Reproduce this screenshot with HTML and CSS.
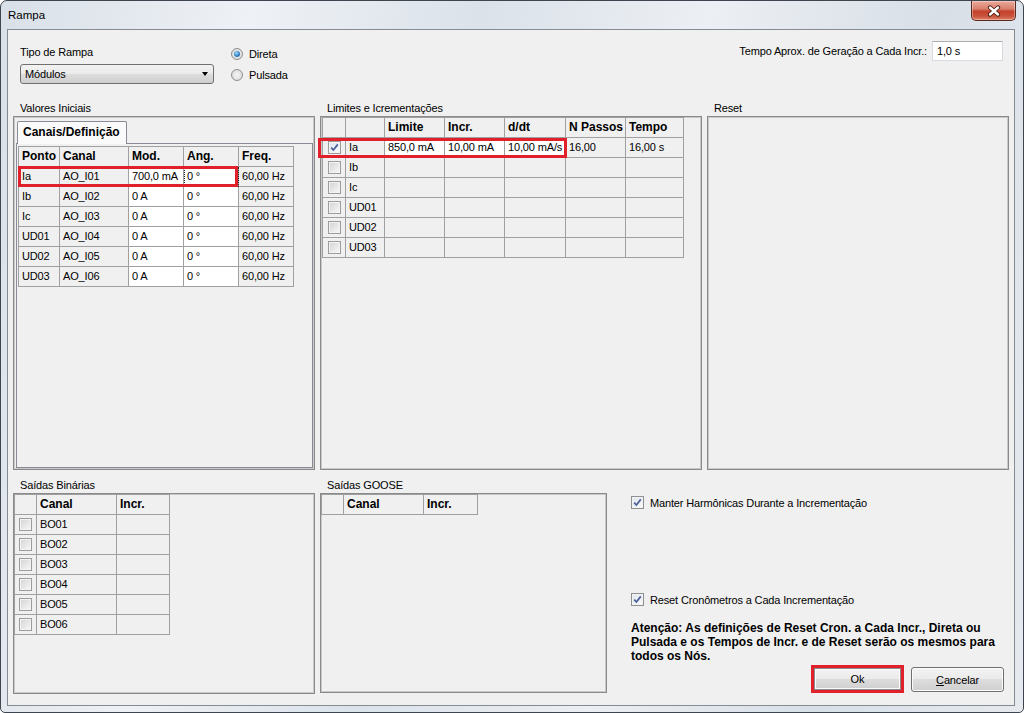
FILE: index.html
```html
<!DOCTYPE html>
<html lang="pt">
<head>
<meta charset="utf-8">
<title>Rampa</title>
<link rel="stylesheet" href="styles.css">
</head>
<body>
<div class="window">
  <div class="titlebar">
    <span class="title">Rampa</span>
    <div class="close">
      <svg width="14" height="12" viewBox="0 0 14 12"><path d="M3 2.5 L11 9.5 M11 2.5 L3 9.5" stroke="#4a1a10" stroke-width="4.2" stroke-linecap="round" fill="none"/><path d="M3 2.5 L11 9.5 M11 2.5 L3 9.5" stroke="#ffffff" stroke-width="2.4" stroke-linecap="round" fill="none"/></svg>
    </div>
  </div>
  <div class="client">
    <div class="top-row">
      <div class="tipo">
        <div class="lbl">Tipo de Rampa</div>
        <div class="combo"><span>Módulos</span><span class="arrow"></span></div>
      </div>
      <div class="radios">
        <div class="radio-row"><span class="radio on"></span>Direta</div>
        <div class="radio-row"><span class="radio"></span>Pulsada</div>
      </div>
      <div class="tempo">
        <span>Tempo Aprox. de Geração a Cada Incr.:</span>
        <div class="textbox">1,0 s</div>
      </div>
    </div>

    <div class="mid-row">
      <section class="group g-valores">
        <div class="glabel">Valores Iniciais</div>
        <div class="gbox valores-box">
          <div class="tabs">
            <div class="tabstrip"><div class="tab">Canais/Definição</div></div>
            <div class="tabpage">
              <div class="grid-wrap val-wrap">
                <div class="dg dg-val">
                  <div class="h">Ponto</div><div class="h">Canal</div><div class="h">Mod.</div><div class="h">Ang.</div><div class="h">Freq.</div>
                  <div>Ia</div><div>AO_I01</div><div class="w">700,0 mA</div><div class="w focus">0 °</div><div>60,00 Hz</div>
                  <div>Ib</div><div>AO_I02</div><div class="w">0 A</div><div class="w">0 °</div><div>60,00 Hz</div>
                  <div>Ic</div><div>AO_I03</div><div class="w">0 A</div><div class="w">0 °</div><div>60,00 Hz</div>
                  <div>UD01</div><div>AO_I04</div><div class="w">0 A</div><div class="w">0 °</div><div>60,00 Hz</div>
                  <div>UD02</div><div>AO_I05</div><div class="w">0 A</div><div class="w">0 °</div><div>60,00 Hz</div>
                  <div>UD03</div><div>AO_I06</div><div class="w">0 A</div><div class="w">0 °</div><div>60,00 Hz</div>
                </div>
                <div class="hl hl-val"></div>
              </div>
            </div>
          </div>
        </div>
      </section>

      <section class="group g-limites">
        <div class="glabel">Limites e Icrementações</div>
        <div class="gbox limites-box">
          <div class="grid-wrap lim-wrap">
            <div class="dg dg-lim">
              <div class="h"></div><div class="h"></div><div class="h">Limite</div><div class="h">Incr.</div><div class="h">d/dt</div><div class="h">N Passos</div><div class="h">Tempo</div>
              <div class="c"><span class="cb on"><svg width="11" height="11" viewBox="0 0 11 11"><path d="M2.2 5.6 L4.4 8 L8.8 2.4" stroke="#4a5e98" stroke-width="1.7" fill="none"/></svg></span></div><div>Ia</div><div class="w">850,0 mA</div><div class="w">10,00 mA</div><div class="w">10,00 mA/s</div><div>16,00</div><div>16,00 s</div>
              <div class="c"><span class="cb"></span></div><div>Ib</div><div></div><div></div><div></div><div></div><div></div>
              <div class="c"><span class="cb"></span></div><div>Ic</div><div></div><div></div><div></div><div></div><div></div>
              <div class="c"><span class="cb"></span></div><div>UD01</div><div></div><div></div><div></div><div></div><div></div>
              <div class="c"><span class="cb"></span></div><div>UD02</div><div></div><div></div><div></div><div></div><div></div>
              <div class="c"><span class="cb"></span></div><div>UD03</div><div></div><div></div><div></div><div></div><div></div>
            </div>
            <div class="hl hl-lim"></div>
          </div>
        </div>
      </section>

      <section class="group g-reset">
        <div class="glabel">Reset</div>
        <div class="gbox"></div>
      </section>
    </div>

    <div class="bottom-row">
      <section class="group g-bin">
        <div class="glabel tall">Saídas Binárias</div>
        <div class="gbox bin-box">
          <div class="dg dg-bin">
            <div class="h"></div><div class="h">Canal</div><div class="h">Incr.</div>
            <div class="c"><span class="cb"></span></div><div>BO01</div><div></div>
            <div class="c"><span class="cb"></span></div><div>BO02</div><div></div>
            <div class="c"><span class="cb"></span></div><div>BO03</div><div></div>
            <div class="c"><span class="cb"></span></div><div>BO04</div><div></div>
            <div class="c"><span class="cb"></span></div><div>BO05</div><div></div>
            <div class="c"><span class="cb"></span></div><div>BO06</div><div></div>
          </div>
        </div>
      </section>

      <section class="group g-goose">
        <div class="glabel tall">Saídas GOOSE</div>
        <div class="gbox goose-box">
          <div class="dg dg-goose">
            <div class="h"></div><div class="h">Canal</div><div class="h">Incr.</div>
          </div>
        </div>
      </section>

      <div class="options">
        <label class="opt first"><span class="cb big on"><svg width="11" height="11" viewBox="0 0 11 11"><path d="M2.2 5.6 L4.4 8 L8.8 2.4" stroke="#4a5e98" stroke-width="1.7" fill="none"/></svg></span>Manter Harmônicas Durante a Incrementação</label>
        <label class="opt second"><span class="cb big on"><svg width="11" height="11" viewBox="0 0 11 11"><path d="M2.2 5.6 L4.4 8 L8.8 2.4" stroke="#4a5e98" stroke-width="1.7" fill="none"/></svg></span>Reset Cronômetros a Cada Incrementação</label>
        <p class="warn">Atenção: As definições de Reset Cron. a Cada Incr., Direta ou<br>Pulsada e os Tempos de Incr. e de Reset serão os mesmos para<br>todos os Nós.</p>
        <div class="buttons">
          <span class="ok-hl"><button class="btn ok">Ok</button></span>
          <button class="btn cancel"><u>C</u>ancelar</button>
        </div>
      </div>
    </div>
  </div>
</div>
</body>
</html>
```

FILE: styles.css
```css
* { box-sizing: border-box; }
html, body { margin: 0; padding: 0; }
body {
  width: 1024px;
  height: 713px;
  overflow: hidden;
  background: #ffffff;
  font-family: "Liberation Sans", Arial, sans-serif;
  font-size: 11px;
  letter-spacing: -0.15px;
  color: #000;
}

.window {
  width: 1024px;
  height: 713px;
  border: 1px solid #3d4550;
  border-radius: 7px 7px 5px 5px;
  background: linear-gradient(100deg, #d9e0e8 0%, #eef1f5 22%, #dbe2ea 42%, #eceff3 62%, #d8dfe7 82%, #e6eaef 100%);
  padding: 0 8px 6px 6px;
  display: flex;
  flex-direction: column;
}

.titlebar {
  height: 28px;
  display: flex;
  align-items: flex-start;
  padding-left: 1px;
}
.title {
  font-size: 11.5px;
  line-height: 28px;
  letter-spacing: 0;
}
.close {
  margin-left: auto;
  margin-right: -1px;
  width: 45px;
  height: 20px;
  border: 1px solid #5b2a20;
  border-top: none;
  border-radius: 0 0 5px 5px;
  background: linear-gradient(#e9a99a 0%, #d9826e 40%, #c4412c 55%, #c9543d 80%, #e08066 100%);
  box-shadow: inset 0 0 0 1px rgba(255,255,255,0.35);
  display: flex;
  align-items: center;
  justify-content: center;
}

.client {
  height: 677px;
  border: 1px solid #858b93;
  background: #f0f0f0;
  display: flex;
  flex-direction: column;
}

/* top row */
.top-row {
  height: 71px;
  display: flex;
  align-items: flex-start;
  padding: 0 11px 0 12px;
}
.tipo { margin-top: 16px; }
.lbl { line-height: 13px; }
.combo {
  margin-top: 5px;
  width: 194px;
  height: 20px;
  border: 1px solid #707070;
  border-radius: 3px;
  background: linear-gradient(#f2f2f2 0%, #ebebeb 49%, #dddddd 50%, #cfcfcf 100%);
  display: flex;
  align-items: center;
  justify-content: space-between;
  padding: 0 4px 0 4px;
}
.arrow {
  width: 0;
  height: 0;
  border-left: 3.5px solid transparent;
  border-right: 3.5px solid transparent;
  border-top: 4px solid #000;
  margin-right: 1px;
}
.radios {
  margin-left: 17px;
  margin-top: 47px;
  margin-top: 17px;
  display: flex;
  flex-direction: column;
  gap: 7px;
}
.radio-row {
  height: 14px;
  display: flex;
  align-items: center;
  gap: 6px;
}
.radio {
  width: 12px;
  height: 12px;
  border-radius: 50%;
  border: 1px solid #8e8f8f;
  background: radial-gradient(circle at 50% 50%, #f5f5f5 0%, #e2e2e2 60%, #cfcfcf 100%);
  display: flex;
  align-items: center;
  justify-content: center;
}
.radio.on::after {
  content: "";
  width: 6px;
  height: 6px;
  border-radius: 50%;
  background: radial-gradient(circle at 40% 35%, #b6e2fa 0%, #3e8cd0 45%, #1b4f8c 100%);
}
.tempo {
  margin-left: auto;
  margin-top: 11px;
  display: flex;
  align-items: center;
  gap: 5px;
}
.textbox {
  width: 71px;
  height: 20px;
  background: #fff;
  border: 1px solid #d6dbe2;
  border-top-color: #abadb3;
  line-height: 18px;
  padding-left: 4px;
}

/* groups */
.mid-row {
  height: 369px;
  display: flex;
  gap: 5px;
  padding-left: 5px;
}
.group { display: flex; flex-direction: column; }
.g-valores, .g-reset { width: 302px; }
.g-limites { width: 382px; }
.glabel {
  height: 15px;
  line-height: 15px;
  padding-left: 7px;
}
.glabel.tall { height: 16px; line-height: 16px; }
.gbox {
  flex: 1;
  border: 1px solid #8a8a8a;
  box-shadow: inset 1px 1px 0 #c9c9c9, inset -1px -1px 0 #c9c9c9;
}
.mid-row .gbox { height: 354px; flex: none; }

.valores-box { padding: 4px 1px 1px 2px; display: flex; }
.tabs { flex: 1; display: flex; flex-direction: column; }
.tabstrip { height: 22px; display: flex; padding-left: 1px; }
.tab {
  width: 110px;
  height: 23px;
  border: 1px solid #898c95;
  border-bottom: none;
  border-radius: 2px 2px 0 0;
  background: #fafafa;
  font-weight: bold;
  font-size: 12px;
  letter-spacing: 0;
  line-height: 21px;
  padding-left: 5px;
  position: relative;
  z-index: 1;
}
.tabpage {
  flex: 1;
  border: 1px solid #898c95;
  background: #f0f0f0;
  padding: 2px 0 0 1px;
}

/* data grids */
.grid-wrap { position: relative; width: max-content; }
.lim-wrap { margin-left: 1px; }
.dg {
  display: grid;
  width: max-content;
  border-left: 1px solid #a0a0a0;
  border-top: 1px solid #a0a0a0;
}
.dg > div {
  height: 20px;
  border-right: 1px solid #a0a0a0;
  border-bottom: 1px solid #a0a0a0;
  background: #f0f0f0;
  padding: 0 3px;
  line-height: 19px;
  white-space: nowrap;
  overflow: hidden;
}
.dg > .h { font-weight: bold; font-size: 12px; letter-spacing: 0; }
.dg > .w { background: #fff; }
.dg > .c { display: flex; align-items: center; justify-content: center; padding: 0; }
.dg > .focus { outline: 1px dotted #222; outline-offset: -1px; }

.dg-val { grid-template-columns: 41px 69px 55px 55px 55px; }
.dg-lim { grid-template-columns: 23px 39px 60px 60px 61px 60px 58px; }
.dg-bin { grid-template-columns: 22px 80px 53px; }
.dg-goose { grid-template-columns: 22px 80px 54px; }

.hl {
  position: absolute;
  border: 3px solid #e0202a;
  pointer-events: none;
}
.hl-val { left: 0; top: 20px; width: 220px; height: 21px; }
.hl-lim { left: -4px; top: 21px; width: 249px; height: 20px; }

.cb {
  width: 13px;
  height: 13px;
  border: 1px solid #9c9c9c;
  background: linear-gradient(135deg, #d2d2d2 0%, #e6e6e6 50%, #f8f8f8 100%);
  box-shadow: inset 0 0 0 1px #f3f3f3;
  display: inline-flex;
  align-items: center;
  justify-content: center;
  flex: none;
}
.cb.on { background: linear-gradient(135deg, #dfe4ee 0%, #eef1f6 60%, #fbfbfd 100%); }
.cb.big { border-color: #8e8f8f; }

/* bottom */
.bottom-row {
  margin-top: 7px;
  display: flex;
  gap: 5px;
  padding-left: 5px;
  flex: 1;
}
.g-bin { width: 302px; }
.g-goose { width: 287px; }
.bin-box { flex: none; height: 201px; }
.goose-box { flex: none; height: 200px; }

.options {
  flex: 1;
  display: flex;
  flex-direction: column;
  padding: 0 10px 0 19px;
}
.opt {
  display: flex;
  align-items: center;
  gap: 6px;
  height: 13px;
}
.opt.first { margin-top: 19px; }
.opt.second { margin-top: 84px; }
.warn {
  margin: 15px 0 0 0;
  font-weight: bold;
  font-size: 12px;
  letter-spacing: 0;
  line-height: 14px;
}
.buttons {
  margin-top: 2px;
  display: flex;
  justify-content: flex-end;
  align-items: flex-start;
  gap: 7px;
}
.ok-hl {
  display: block;
  width: 93px;
  height: 28px;
  border: 3px solid #e0202a;
}
.btn {
  font-family: "Liberation Sans", Arial, sans-serif;
  font-size: 11px;
  letter-spacing: -0.15px;
  color: #000;
  border: 1px solid #707070;
  border-radius: 3px;
  background: linear-gradient(#f2f2f2 0%, #ebebeb 49%, #dddddd 50%, #cfcfcf 100%);
  box-shadow: inset 0 0 0 1px #fbfbfb;
  padding: 0;
  margin: 0;
}
.btn.ok { width: 87px; height: 22px; display: block; border-radius: 0; border-color: #8a8a8a; }
.btn.cancel { width: 93px; height: 25px; margin-top: 2px; }
```
